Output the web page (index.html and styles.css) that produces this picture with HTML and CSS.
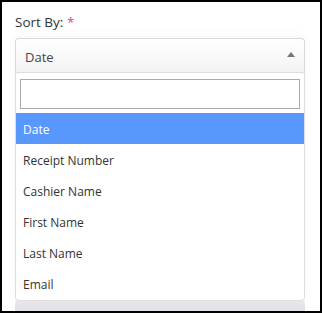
FILE: index.html
```html
<!DOCTYPE html>
<html lang="en">
<head>
    <meta charset="UTF-8">
    <meta name="viewport" content="width=device-width, initial-scale=1.0">
    <title>Sort By</title>
    <link rel="stylesheet" href="styles.css">
</head>
<body>
    <div class="frame">
        <label class="field-label" for="sortSearch">Sort By: <span class="req">*</span></label>

        <div class="select open">
            <div class="select-head">
                <span class="select-value">Date</span>
                <span class="select-arrow"></span>
            </div>
            <div class="select-drop">
                <div class="search-wrap">
                    <input type="text" id="sortSearch" class="search">
                </div>
                <ul class="options">
                    <li class="option active">Date</li>
                    <li class="option">Receipt Number</li>
                    <li class="option">Cashier Name</li>
                    <li class="option">First Name</li>
                    <li class="option">Last Name</li>
                    <li class="option">Email</li>
                </ul>
            </div>
        </div>

        <div class="next-select"></div>
    </div>
</body>
</html>
```

FILE: styles.css
```css
* {
    box-sizing: border-box;
}

body {
    margin: 0;
    background-color: #fff;
    font-family: 'Open Sans', sans-serif;
    font-size: 13px;
    color: #333;
}

.frame {
    width: 322px;
    height: 313px;
    border: 2px solid #000;
    padding: 11px 15px 0 13px;
    overflow: hidden;
}

.field-label {
    display: block;
    font-size: 13.5px;
    line-height: 19px;
    color: #333;
    margin-bottom: 6px;
}

.req {
    color: #e8455f;
}

.select {
    position: relative;
    width: 290px;
    box-shadow: 0 -3px 10px rgba(0, 0, 0, 0.03);
}

.select-head {
    display: flex;
    align-items: center;
    justify-content: space-between;
    height: 35px;
    padding: 0 8px 0 9px;
    border: 1px solid #d8d8d8;
    border-bottom-color: #ddd;
    border-radius: 4px 4px 0 0;
    background: linear-gradient(to bottom, #fff 0%, #f3f3f5 100%);
}

.select-value {
    font-size: 13px;
    color: #444;
    padding-top: 2px;
}

.select-arrow {
    width: 0;
    height: 0;
    border-left: 4px solid transparent;
    border-right: 4px solid transparent;
    border-bottom: 5px solid #777;
    margin-right: 1px;
    margin-top: -2px;
}

.select-drop {
    position: relative;
    z-index: 2;
    border: 1px solid #ddd;
    border-top: none;
    border-radius: 0 0 4px 4px;
    background-color: #fff;
    padding-bottom: 1px;
}

.search-wrap {
    padding: 6px 4px 4px;
}

.search {
    display: block;
    width: 100%;
    height: 30px;
    border: 1px solid #aaa;
    outline: none;
    padding: 4px 6px;
    font-family: inherit;
    font-size: 13px;
}

.options {
    list-style: none;
    margin: 0;
    padding: 0;
}

.option {
    height: 31px;
    line-height: 31px;
    padding: 1px 0 0 7px;
    color: #333;
    font-size: 12px;
}

.option.active {
    background-color: #5897fb;
    color: #fff;
}

.next-select {
    width: 290px;
    height: 20px;
    margin-top: -1px;
    border-radius: 4px 4px 0 0;
    background: linear-gradient(to bottom, #e9e8ed 0%, #dcdbe2 100%);
}
```
